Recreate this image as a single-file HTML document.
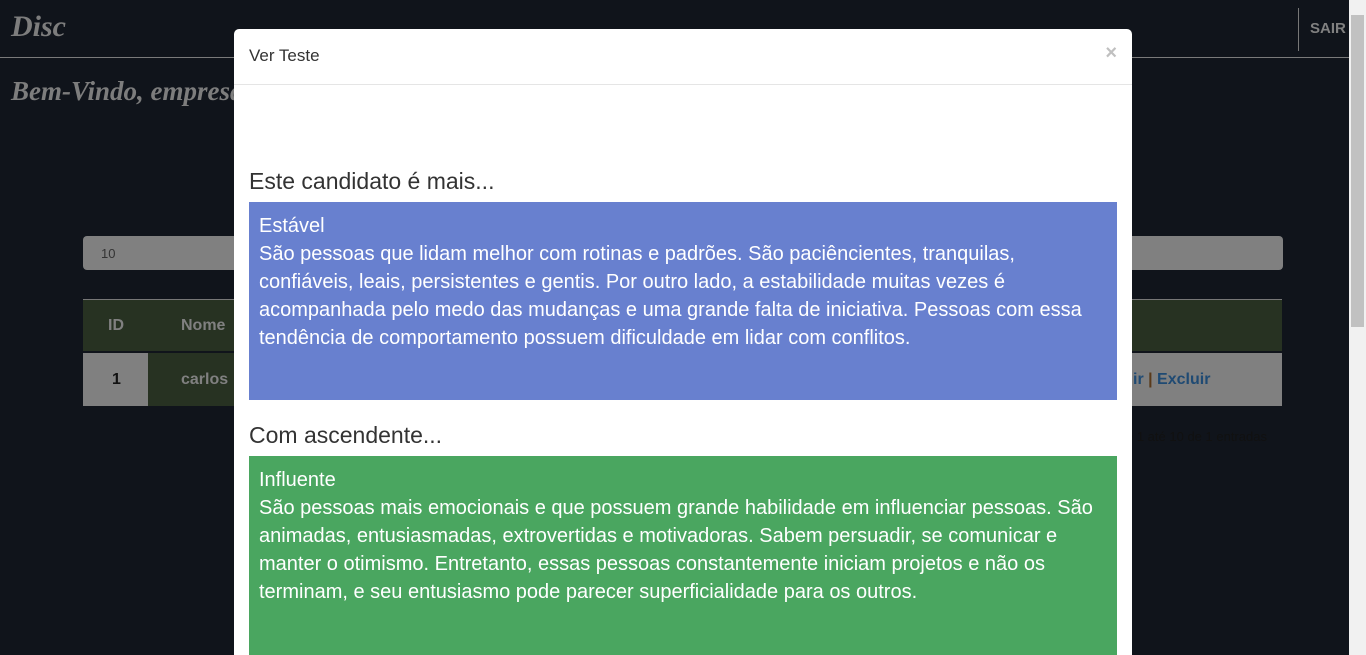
<!DOCTYPE html>
<html style="width:1366px;height:655px;overflow:hidden"><head><meta charset="utf-8"><style>
*{box-sizing:border-box;margin:0;padding:0}
body{width:1366px;height:655px;overflow:hidden;background:#10141b;font-family:"Liberation Sans",sans-serif;position:relative}
.nav{position:absolute;left:0;top:0;width:1349px;height:58px;border-bottom:1px solid #7a7a7a}
.logo{position:absolute;left:11px;top:10px;font:italic bold 30px "Liberation Serif",serif;color:#7d7d7d}
.welcome{position:absolute;left:11px;top:76px;font:italic bold 27px "Liberation Serif",serif;color:#7d7d7d}
.sep{position:absolute;left:1298px;top:8px;width:1px;height:43px;background:#777}
.sair{position:absolute;left:1310px;top:20px;font-weight:bold;font-size:15px;color:#808080}
.sb{position:absolute;right:0;top:0;width:17px;height:655px;background:#f1f1f1}
.th{position:absolute;left:2px;top:15px;width:13px;height:312px;background:#c1c1c1}
.input{position:absolute;left:83px;top:236px;width:1200px;height:34px;background:#808080;border-radius:4px;color:#333;font-size:13px;padding:10px 18px}
.thead{position:absolute;left:83px;top:299px;width:1199px;height:52px;background:#273222;border-top:1px solid #777;color:#808080;font-weight:bold;font-size:16px}
.row{position:absolute;left:83px;top:353px;width:1199px;height:53px;background:#808080;font-weight:bold;font-size:16px}
.info{position:absolute;left:1126px;top:429px;font-size:13px;color:#111}
.modal{position:absolute;left:234px;top:29px;width:898px;height:626px;background:#fff;border-radius:5px 5px 0 0;overflow:hidden}
.mh{height:56px;border-bottom:1px solid #e5e5e5;padding:17px 15px;font-size:17px;color:#333;position:relative}
.x{position:absolute;right:15px;top:13px;font-size:20px;font-weight:bold;color:#c0c0c0}
h3{position:absolute;left:15px;font-weight:normal;font-size:23px;color:#333}
.box{position:absolute;left:15px;width:868px;color:#fff;font-size:20px;line-height:28px;padding:10px 10px}
</style></head><body>
<div class="nav"><div class="logo">Disc</div><div class="sep"></div><div class="sair">SAIR</div></div>
<div class="welcome">Bem-Vindo, empresa</div>
<div class="input">10</div>
<div class="thead"><span style="position:absolute;left:25px;top:17px">ID</span><span style="position:absolute;left:98px;top:17px">Nome</span></div>
<div class="row"><div style="position:absolute;left:0;top:0;width:65px;height:53px;color:#111"><span style="position:absolute;left:29px;top:18px">1</span></div><div style="position:absolute;left:65px;top:0;width:90px;height:53px;background:#273222;color:#808080"><span style="position:absolute;left:33px;top:18px">carlos</span></div><span style="position:absolute;left:1050px;top:18px;color:#1f4a73">ir <span style="color:#5a3a1a">|</span> Excluir</span></div>
<div class="info">e 1 até 10 de 1 entradas</div>
<div class="sb"><div class="th"></div></div>
<div class="modal">
<div class="mh">Ver Teste<span class="x">×</span></div>
<h3 style="top:139px">Este candidato é mais...</h3>
<div class="box" style="top:173px;height:198px;background:#6880cf">Estável<br>São pessoas que lidam melhor com rotinas e padrões. São paciêncientes, tranquilas, confiáveis, leais, persistentes e gentis. Por outro lado, a estabilidade muitas vezes é acompanhada pelo medo das mudanças e uma grande falta de iniciativa. Pessoas com essa tendência de comportamento possuem dificuldade em lidar com conflitos.</div>
<h3 style="top:393px">Com ascendente...</h3>
<div class="box" style="top:427px;height:220px;background:#4aa660">Influente<br>São pessoas mais emocionais e que possuem grande habilidade em influenciar pessoas. São animadas, entusiasmadas, extrovertidas e motivadoras. Sabem persuadir, se comunicar e manter o otimismo. Entretanto, essas pessoas constantemente iniciam projetos e não os terminam, e seu entusiasmo pode parecer superficialidade para os outros.</div>
</div>
</body></html>
